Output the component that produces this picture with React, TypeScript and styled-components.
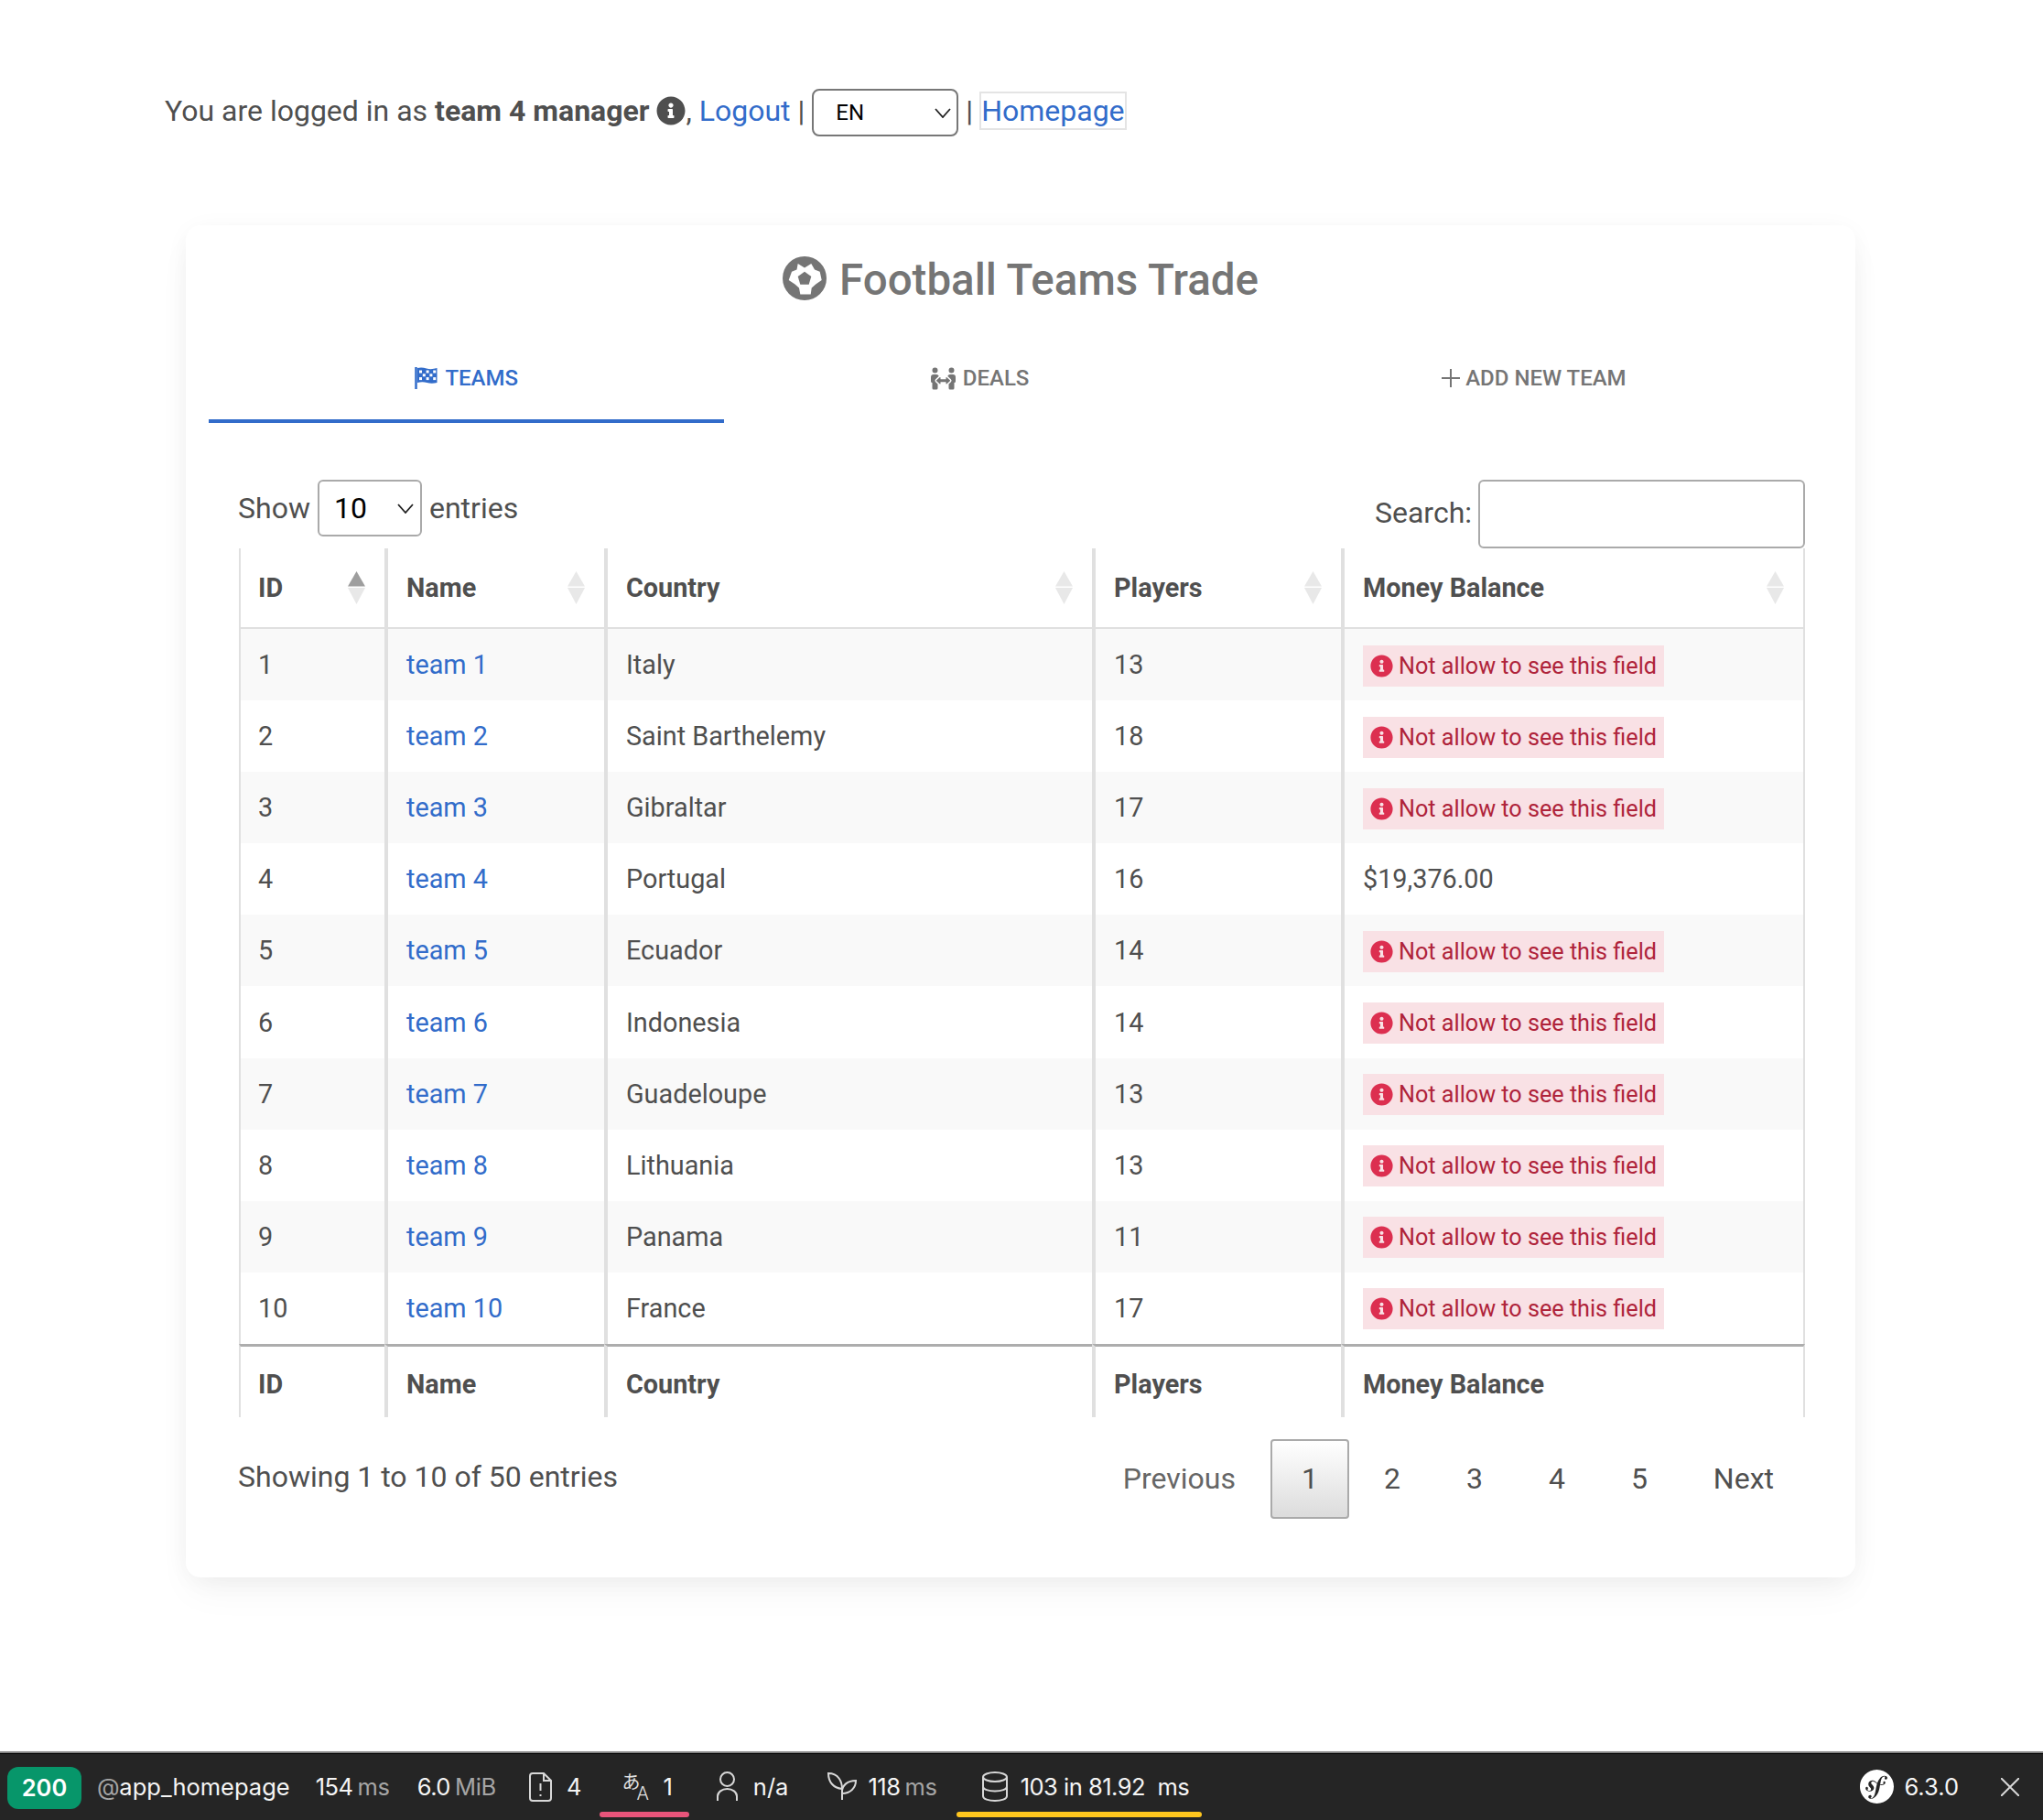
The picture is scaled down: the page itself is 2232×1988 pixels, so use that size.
import * as React from 'react';
import styled, { createGlobalStyle } from 'styled-components';
import { FaInfoCircle, FaPeopleArrows } from 'react-icons/fa';
import { SiSymfony } from 'react-icons/si';

const GlobalStyle = createGlobalStyle`
  html, body { margin: 0; padding: 0; background: #fff; }
  body { font-family: Roboto, "Liberation Sans", sans-serif; color: #4f4f4f; font-size: 32px; }
  * { box-sizing: border-box; }
`;

const chevron = (w: number, h: number) =>
  `url("data:image/svg+xml,%3Csvg xmlns='http://www.w3.org/2000/svg' width='${w}' height='${h}' viewBox='0 0 ${w} ${h}'%3E%3Cpath d='M1 1l${(w - 2) / 2} ${h - 2} ${(w - 2) / 2} -${h - 2}' fill='none' stroke='%23222' stroke-width='1.8'/%3E%3C/svg%3E")`;

const Page = styled.div`
  min-height: 100vh;
  display: flex;
  flex-direction: column;
`;

const TopBar = styled.div`
  display: flex;
  align-items: center;
  height: 52px;
  padding-bottom: 4px;
  margin: 97px 0 0 180px;
  white-space: pre;
`;

const Link = styled.a`
  color: #326cca;
  text-decoration: none;
`;

const HomeLink = styled(Link)`
  border: 2px solid #e4e4e4;
  height: 42px;
  line-height: 38px;
  margin-left: -1px;
`;

const Pipe = styled.span`
  margin: 0 8px;
`;

const InfoIcon = styled(FaInfoCircle)`
  width: 32px;
  height: 32px;
  margin: 0 0 0 8px;
  color: #4f4f4f;
`;

const LangSelect = styled.select`
  appearance: none;
  align-self: flex-start;
  width: 160px;
  height: 52px;
  border: 2px solid #777;
  border-radius: 8px;
  padding: 0 0 0 24px;
  font: 24px Roboto, sans-serif;
  color: #000;
  background: #fff ${chevron(18, 11)} no-repeat right 6px center;
`;

const Card = styled.main`
  width: 1824px;
  margin: 97px 0 0 203px;
  padding: 34px 25px 64px;
  background: #fff;
  border-radius: 16px;
  box-shadow: 0 4px 30px -6px rgba(0, 0, 0, 0.07), 0 20px 40px -4px rgba(0, 0, 0, 0.04);
`;

const Title = styled.h1`
  display: flex;
  align-items: center;
  justify-content: center;
  gap: 14px;
  height: 48px;
  margin: 0;
  font-size: 47.5px;
  font-weight: 500;
  color: #757575;
  svg { width: 48px; height: 48px; }
`;

const TitleText = styled.span`
  padding-top: 4px;
`;

const Tabs = styled.nav`
  display: flex;
  margin-top: 36px;
`;

const Tab = styled.a<{ $active?: boolean }>`
  flex: 1 1 auto;
  display: flex;
  align-items: center;
  justify-content: center;
  gap: 8px;
  height: 98px;
  padding-top: 4px;
  font-size: 24px;
  font-weight: 500;
  text-transform: uppercase;
  color: ${(p) => (p.$active ? '#326cca' : '#757575')};
  border-bottom: 4px solid ${(p) => (p.$active ? '#326cca' : 'transparent')};
  svg { flex: none; }
`;

const PlusIcon = styled.svg`
  margin-right: -2px;
`;

const Content = styled.section`
  margin: 62px 30px 0 33px;
`;

const Controls = styled.div`
  display: flex;
  justify-content: space-between;
  align-items: flex-start;
  height: 75px;
`;

const ShowLabel = styled.label`
  display: flex;
  align-items: center;
  gap: 8px;
  margin-left: -1px;
`;

const SearchLabel = styled.label`
  display: flex;
  align-items: flex-start;
  gap: 7px;
  line-height: 72px;
`;

const SizeSelect = styled.select`
  appearance: none;
  width: 114px;
  height: 62px;
  border: 2px solid #aaa;
  border-radius: 6px;
  padding: 0 0 0 16px;
  font: 32px Roboto, sans-serif;
  color: #000;
  background: #fff ${chevron(18, 11)} no-repeat right 7px center;
`;

const SearchInput = styled.input`
  width: 357px;
  height: 75px;
  border: 2px solid #aaa;
  border-radius: 6px;
  background: #fff;
`;

const Table = styled.table`
  width: 1711px;
  table-layout: fixed;
  border-collapse: separate;
  border-spacing: 0;
  font-size: 28.8px;
`;

const cellBorders = `
  border-left: 4px solid #e0e0e0;
  &:first-child { border-left-width: 2px; padding-left: 19px; }
  &:last-child { border-right: 2px solid #e0e0e0; }
`;

const HeadCell = styled.th<{ $foot?: boolean }>`
  padding: ${(p) => (p.$foot ? '5px' : '0')} 21px 0 20px;
  ${cellBorders}
  height: ${(p) => (p.$foot ? 80 : 88)}px;
  text-align: left;
  font-weight: 700;
  ${(p) =>
    p.$foot ? 'border-top: 3px solid #adadad;' : 'border-bottom: 2px solid #e0e0e0;'}
`;

const HeadInner = styled.div`
  display: flex;
  align-items: center;
  justify-content: space-between;
`;

const Row = styled.tr<{ $striped: boolean }>`
  height: 78.1px;
  background: ${(p) => (p.$striped ? '#f9f9f9' : '#fff')};
`;

const Cell = styled.td`
  padding: 0 20px;
  ${cellBorders}
`;

const Denied = styled.span`
  display: inline-flex;
  align-items: center;
  gap: 6px;
  height: 45px;
  padding: 0 8px;
  margin-top: 2px;
  vertical-align: middle;
  background: #f9e1e5;
  color: #af233a;
  font-size: 25.2px;
  svg { width: 25px; height: 25px; color: #dc2f50; }
`;

const Bottom = styled.div`
  display: flex;
  justify-content: space-between;
  margin-top: 24px;
`;

const Info = styled.div`
  padding-top: 22px;
  margin-left: -1px;
`;

const Pager = styled.div`
  display: flex;
  gap: 4px;
`;

const PageButton = styled.a<{ $current?: boolean; $muted?: boolean }>`
  height: 87px;
  line-height: 83px;
  padding: 0 32px;
  border: 2px solid ${(p) => (p.$current ? '#aaa' : 'transparent')};
  border-radius: 4px;
  color: ${(p) => (p.$muted ? '#666' : '#4f4f4f')};
  background: ${(p) => (p.$current ? 'linear-gradient(#fff, #dcdcdc)' : 'none')};
`;

const Toolbar = styled.footer`
  margin-top: auto;
  height: 75px;
  display: flex;
  align-items: stretch;
  padding-left: 8px;
  background: #252525;
  border-top: 2px solid #858585;
  box-shadow: inset 0 1px 0 #000;
  font-family: Inter, sans-serif;
  font-size: 25.5px;
  color: #f5f5f5;
  white-space: pre;
`;

const Status = styled.span`
  align-self: center;
  width: 81px;
  height: 46px;
  line-height: 46px;
  margin-top: 2px;
  text-align: center;
  border-radius: 12px;
  background: #07966a;
  font-weight: 600;
  color: #fff;
`;

const ToolItem = styled.div<{
  $left: number;
  $right?: number;
  $bar?: string;
  $gap?: number;
  $margin?: number;
}>`
  position: relative;
  display: flex;
  align-items: center;
  gap: ${(p) => p.$gap ?? 5}px;
  margin-left: ${(p) => p.$margin ?? 0}px;
  padding: 0 ${(p) => p.$right ?? 0}px 0 ${(p) => p.$left}px;
  svg { flex: none; color: #d8d8d8; }
  ${(p) =>
    p.$bar &&
    `&::after {
      content: '';
      position: absolute;
      left: 0; right: 0; bottom: 3px;
      height: 6px;
      border-radius: 3px;
      background: ${p.$bar};
    }`}
`;

const Measure = styled.span`
  display: flex;
  gap: 5px;
`;

const Num = styled.span`
  letter-spacing: -0.5px;
`;

const Unit = styled.span`
  color: #a5a5a5;
  letter-spacing: -0.3px;
`;

const ToolLogo = styled(ToolItem)`
  margin-left: auto;
  svg { color: #fff; }
`;

const TransIcon = styled.span`
  display: flex;
  align-items: flex-start;
  width: 32px;
  height: 32px;
  color: #e0e0e0;
`;

const TransKana = styled.span`
  font-family: "Noto Sans CJK JP", sans-serif;
  font-size: 20px;
  line-height: 20px;
`;

const TransLatin = styled.span`
  font-size: 20px;
  font-weight: 300;
  line-height: 16px;
  margin: 15px 0 0 -4px;
`;

const stroke = { fill: 'none', stroke: 'currentColor', strokeWidth: 2 };

function SortArrows({ active }: { active?: boolean }) {
  return (
    <svg width="19" height="36" viewBox="0 0 19 36">
      <path d="M9.5 0L19 16.500H0z" fill={active ? '#9e9e9e' : '#e8e8e8'} />
      <path d="M0 18h19L9.500 36z" fill="#e8e8e8" />
    </svg>
  );
}

function BallIcon() {
  return (
    <svg viewBox="0 0 48 48">
      <circle cx="24" cy="24" r="24" fill="currentColor" />
      <path
        d="M16.700 8L24 12.500 31.300 8l3.700 6.500 5.700 2.200 2 9.300-6.500 4.500-4.500 4-1 7H19.300l-1.300-7-4.500-4-6.800-4.500 3.300-9.300 5.500-2.200z"
        fill="#fff"
      />
      <path d="M24 16.700L31.300 22l-2.600 8.700h-9.400L16.700 22z" fill="currentColor" />
    </svg>
  );
}

const flagCells = [0, 1, 2, 3, 4].flatMap((col) =>
  [0, 1, 2].filter((row) => (row + col) % 2 === 0).map((row) => [col, row])
);

function FlagIcon() {
  return (
    <svg width="25" height="24" viewBox="0 0 25 24">
      <path d="M1.500 0v24" fill="none" stroke="currentColor" strokeWidth="2.500" />
      <path d="M3 1q5-1 10 .5t11.500-.5v16q-6 1.500-11 0T3 17z" fill="currentColor" />
      {flagCells.map(([col, row]) => (
        <rect key={`${col}-${row}`} x={5 + col * 3.800} y={3.500 + row * 3.800} width="3" height="3" fill="#fff" />
      ))}
    </svg>
  );
}

const columns = ['ID', 'Name', 'Country', 'Players', 'Money Balance'];
const widths = [159, 240, 533, 272, 507];

const teams: [number, string, number][] = [
  [1, 'Italy', 13],
  [2, 'Saint Barthelemy', 18],
  [3, 'Gibraltar', 17],
  [4, 'Portugal', 16],
  [5, 'Ecuador', 14],
  [6, 'Indonesia', 14],
  [7, 'Guadeloupe', 13],
  [8, 'Lithuania', 13],
  [9, 'Panama', 11],
  [10, 'France', 17]
];

export default function App() {
  return (
    <Page>
      <GlobalStyle />
      <TopBar>
        <span>
          You are logged in as <b>team 4 manager</b>
        </span>
        <InfoIcon />
        <span>, </span>
        <Link href="#">Logout</Link>
        <Pipe>|</Pipe>
        <LangSelect defaultValue="EN">
          <option>EN</option>
        </LangSelect>
        <Pipe>|</Pipe>
        <HomeLink href="#">Homepage</HomeLink>
      </TopBar>

      <Card>
        <Title>
          <BallIcon />
          <TitleText>Football Teams Trade</TitleText>
        </Title>
        <Tabs>
          <Tab $active>
            <FlagIcon />
            Teams
          </Tab>
          <Tab>
            <FaPeopleArrows size={27} />
            Deals
          </Tab>
          <Tab>
            <PlusIcon width="20" height="20" viewBox="0 0 20 20">
              <path d="M10 0v20M0 10h20" {...stroke} />
            </PlusIcon>
            Add new team
          </Tab>
        </Tabs>

        <Content>
          <Controls>
            <ShowLabel>
              Show
              <SizeSelect defaultValue="10">
                <option>10</option>
              </SizeSelect>
              entries
            </ShowLabel>
            <SearchLabel>
              Search:
              <SearchInput />
            </SearchLabel>
          </Controls>

          <Table>
            <colgroup>
              {widths.map((w) => (
                <col key={w} width={w} />
              ))}
            </colgroup>
            <thead>
              <tr>
                {columns.map((c, i) => (
                  <HeadCell key={c}>
                    <HeadInner>
                      {c}
                      <SortArrows active={i === 0} />
                    </HeadInner>
                  </HeadCell>
                ))}
              </tr>
            </thead>
            <tbody>
              {teams.map(([id, country, players]) => (
                <Row key={id} $striped={id % 2 === 1}>
                  <Cell>{id}</Cell>
                  <Cell>
                    <Link href="#">team {id}</Link>
                  </Cell>
                  <Cell>{country}</Cell>
                  <Cell>{players}</Cell>
                  <Cell>
                    {id === 4 ? (
                      '$19,376.00'
                    ) : (
                      <Denied>
                        <FaInfoCircle />
                        Not allow to see this field
                      </Denied>
                    )}
                  </Cell>
                </Row>
              ))}
            </tbody>
            <tfoot>
              <tr>
                {columns.map((c) => (
                  <HeadCell key={c} $foot>
                    {c}
                  </HeadCell>
                ))}
              </tr>
            </tfoot>
          </Table>

          <Bottom>
            <Info>Showing 1 to 10 of 50 entries</Info>
            <Pager>
              <PageButton $muted>Previous</PageButton>
              <PageButton $current>1</PageButton>
              <PageButton>2</PageButton>
              <PageButton>3</PageButton>
              <PageButton>4</PageButton>
              <PageButton>5</PageButton>
              <PageButton>Next</PageButton>
            </Pager>
          </Bottom>
        </Content>
      </Card>

      <Toolbar>
        <Status>200</Status>
        <ToolItem $left={17}>
          <span>
            <Unit>@</Unit>app_homepage
          </span>
        </ToolItem>
        <ToolItem $left={28}>
          <Num>154</Num>
          <Unit>ms</Unit>
        </ToolItem>
        <ToolItem $left={30}>
          <Num>6.0</Num>
          <Unit>MiB</Unit>
        </ToolItem>
        <ToolItem $left={36} $gap={16}>
          <svg width="25" height="32" viewBox="0 0 25 32" {...stroke}>
            <path d="M4 1h12l8 8v19a3 3 0 0 1-3 3H4a3 3 0 0 1-3-3V4a3 3 0 0 1 3-3z" />
            <path d="M16 1v8h8M12.500 12v8M12.500 24v2" />
          </svg>
          4
        </ToolItem>
        <ToolItem $margin={20} $left={24} $right={18} $bar="#e8547a" $gap={13}>
          <TransIcon>
            <TransKana>あ</TransKana>
            <TransLatin>A</TransLatin>
          </TransIcon>
          1
        </ToolItem>
        <ToolItem $left={30} $gap={17}>
          <svg width="23" height="33" viewBox="0 0 23 33" {...stroke}>
            <ellipse cx="11.500" cy="8.500" rx="7.500" ry="7.500" />
            <path d="M1 32v-5a10.500 8 0 0 1 21 0v5" />
          </svg>
          n/a
        </ToolItem>
        <ToolItem $left={43} $gap={12}>
          <svg width="32" height="32" viewBox="0 0 32 32" {...stroke}>
            <path d="M16 30V18C6 17 1 10 1 1c11 0 15 9 15 17" />
            <path d="M16 23c9 0 15-6 15-14-9 0-15 5-15 12" />
          </svg>
          <Measure>
            <Num>118</Num>
            <Unit>ms</Unit>
          </Measure>
        </ToolItem>
        <ToolItem $margin={21} $left={28} $right={14} $bar="#ffc61e" $gap={14}>
          <svg width="28" height="33" viewBox="0 0 28 33" {...stroke}>
            <ellipse cx="14" cy="6" rx="13" ry="5" />
            <path d="M1 6v21c0 3 6 5 13 5s13-2 13-5V6M1 16.500c0 3 6 5 13 5s13-2 13-5" />
          </svg>
          <Num>103 in 81.92  ms</Num>
        </ToolItem>
        <ToolLogo $left={0} $right={25} $gap={11}>
          <SiSymfony size={37} />
          6.3.0
        </ToolLogo>
        <ToolItem $left={21} $right={26}>
          <svg width="20" height="20" viewBox="0 0 20 20" {...stroke}>
            <path d="M0 0l20 20M20 0L0 20" />
          </svg>
        </ToolItem>
      </Toolbar>
    </Page>
  );
}
